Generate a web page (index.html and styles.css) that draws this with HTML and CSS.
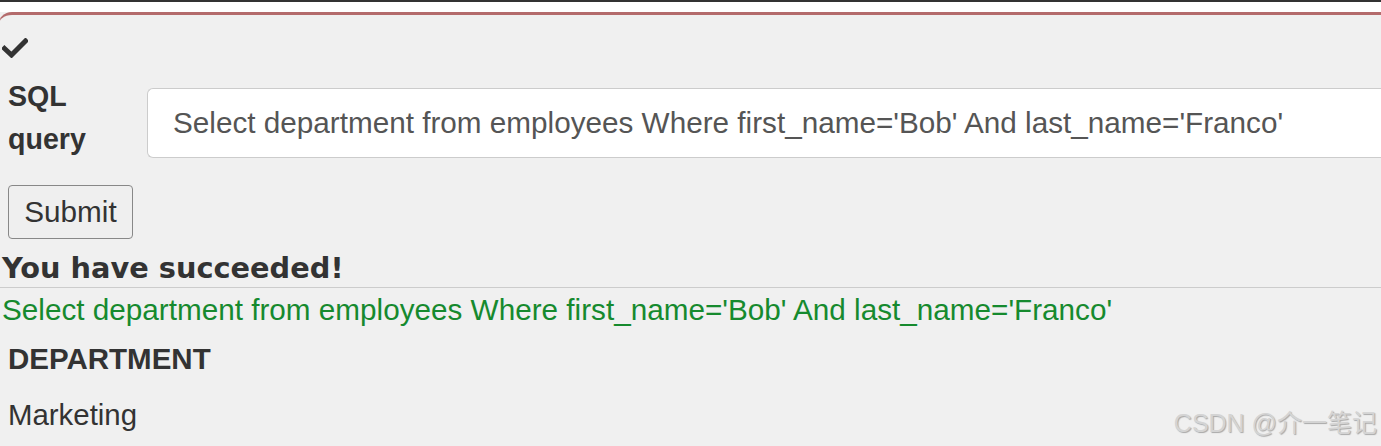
FILE: index.html
```html
<!DOCTYPE html>
<html>
<head>
<meta charset="utf-8">
<link rel="stylesheet" href="styles.css">
</head>
<body>
<div class="topbar"></div>
<div class="gap"></div>
<div class="panel">
  <div class="icon-row">
    <svg class="check" viewBox="0 0 26 20" width="26" height="20"><path d="M2.5 10.5 L9.5 17 L23.5 3" fill="none" stroke="#333" stroke-width="5" stroke-linecap="square" stroke-linejoin="miter"/></svg>
  </div>
  <div class="form-row">
    <label class="label">SQL query</label>
    <div class="input">Select department from employees Where first_name='Bob' And last_name='Franco'</div>
  </div>
  <button class="btn">Submit</button>
  <div class="success">You have succeeded!</div>
  <div class="rule"></div>
  <div class="query">Select department from employees Where first_name='Bob' And last_name='Franco'</div>
  <table class="result">
    <tr><th>DEPARTMENT</th></tr>
    <tr><td>Marketing</td></tr>
  </table>
  <div class="watermark">CSDN @介一笔记</div>
</div>
</body>
</html>
```
FILE: styles.css
```css
html, body {
  margin: 0;
  padding: 0;
  background: #f0f0f0;
  font-family: "Liberation Sans", Arial, sans-serif;
  color: #333;
  overflow: hidden;
}
.topbar {
  height: 2px;
  background: #333;
}
.gap {
  height: 10px;
  background: #fff;
}
.panel {
  position: relative;
  height: 440px;
  margin-left: -2px;
  border-top: 3px solid #b46b6c;
  border-top-left-radius: 14px;
  background: #f0f0f0;
  box-sizing: border-box;
}
.icon-row {
  padding: 23px 0 0 4px;
  height: 20px;
}
.check {
  display: block;
}
.form-row {
  display: flex;
  align-items: flex-start;
  margin-top: 17px;
  padding-left: 10px;
}
.label {
  width: 139px;
  font-weight: bold;
  font-size: 28.6px;
  line-height: 43px;
}
.input {
  flex: 1;
  margin-top: 13px;
  height: 70px;
  box-sizing: border-box;
  background: #fff;
  border: 1px solid #ccc;
  border-right: 0;
  border-radius: 6px 0 0 6px;
  padding-left: 25px;
  font-size: 29.7px;
  line-height: 68px;
  color: #555;
  white-space: nowrap;
  overflow: hidden;
}
.btn {
  display: block;
  margin: 24px 0 0 10px;
  width: 125px;
  height: 54px;
  font-family: "Liberation Sans", Arial, sans-serif;
  font-size: 29.7px;
  color: #333;
  background: #efefef;
  border: 1px solid #888;
  border-radius: 4px;
  padding: 0;
}
.success {
  margin: 13px 0 0 4px;
  font-family: "DejaVu Sans", sans-serif;
  font-weight: bold;
  font-size: 28.8px;
  line-height: 32px;
}
.rule {
  margin-top: 3px;
  height: 1px;
  background: #ccc;
}
.query {
  margin: 0 0 0 4px;
  font-size: 29.7px;
  line-height: 44px;
  color: #168a2e;
  white-space: nowrap;
}
.result {
  border-collapse: collapse;
  margin-left: 2px;
  margin-top: 2px;
}
.result th {
  text-align: left;
  font-size: 29.5px;
  font-weight: bold;
  padding: 8px 8px 14px 8px;
  line-height: 34px;
}
.result td {
  font-size: 29.4px;
  padding: 8px 8px 8px 8px;
  line-height: 34px;
}
.watermark {
  position: absolute;
  right: 4px;
  top: 388px;
  font-family: "Liberation Sans", "Noto Sans CJK SC", sans-serif;
  font-size: 25px;
  color: #d4d4d4;
  text-shadow: 1px 1px 1px #a8a8a8;
}
```
